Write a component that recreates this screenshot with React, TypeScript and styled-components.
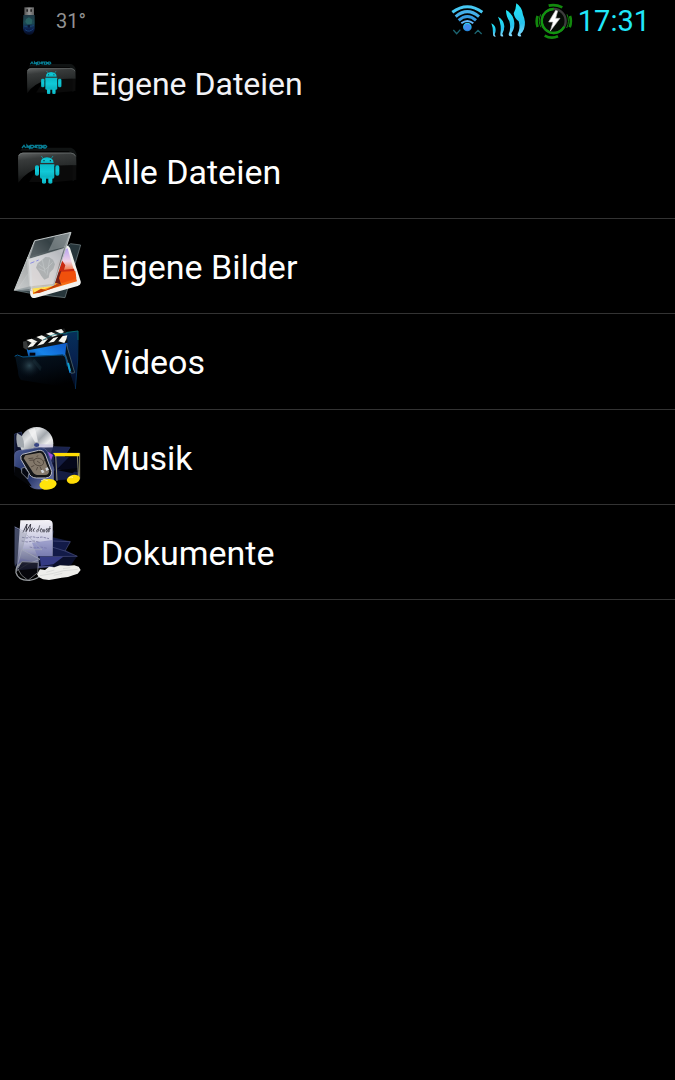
import React from "react";
import styled, { createGlobalStyle } from "styled-components";

const GlobalStyle = createGlobalStyle`
  * { box-sizing: border-box; }
  html, body { margin: 0; background: #000; }
  body { font-family: Roboto, "Liberation Sans", sans-serif; color: #fff; }
`;

const Screen = styled.div`
  min-height: 100vh;
  background: #000;
`;

const StatusBar = styled.div`
  display: flex;
  justify-content: space-between;
  height: 42px;
  padding: 0 25px 0 0;
`;

const StatusGroup = styled.div`
  display: flex;
  align-items: center;
`;

const Temperature = styled.span`
  padding-left: 16px;
  color: #929292;
  font-size: 20px;
  line-height: 42px;
`;

const Clock = styled.time`
  padding-left: 4px;
  color: #20e8fa;
  font-size: 29px;
  line-height: 42px;
`;

const Header = styled.header`
  display: flex;
  align-items: center;
  height: 82px;
  padding-left: 17px;
`;

const Title = styled.h1`
  margin: 0;
  padding: 2px 0 0 6px;
  color: #f2f2f6;
  font-size: 32px;
  font-weight: 400;
  line-height: 84px;
`;

const FolderList = styled.ul`
  display: grid;
  grid-auto-rows: 1fr;
  min-height: 476px;
  margin: 0;
  padding: 0;
  list-style: none;
`;

const FolderRow = styled.li`
  border-bottom: 1px solid #333;
`;

const FolderButton = styled.button`
  display: flex;
  align-items: center;
  gap: 6px;
  width: 100%;
  height: 100%;
  padding: 0 5px;
  border: 0;
  background: none;
  color: #fff;
  font: 400 34px/40px Roboto, "Liberation Sans", sans-serif;
  text-align: left;
`;

const FolderName = styled.span`
  padding-top: 2px;
`;

const Drawing = styled.svg`
  display: block;
  flex: none;
`;

const UsbIcon = () => (
  <Drawing width="40" height="42" viewBox="0 0 120 126" aria-hidden="true">
    <defs>
      <linearGradient id="usbMetal" x2="1">
        <stop offset="0" stopColor="#555" />
        <stop offset=".5" stopColor="#959595" />
        <stop offset="1" stopColor="#606060" />
      </linearGradient>
      <linearGradient id="usbBody" x2="0" y2="1">
        <stop offset="0" stopColor="#203844" />
        <stop offset=".4" stopColor="#1c4a54" />
        <stop offset=".7" stopColor="#0c2050" />
        <stop offset="1" stopColor="#040b1c" />
      </linearGradient>
    </defs>
    <path d="M73 22H102V46H73Z" fill="url(#usbMetal)" />
    <path d="M79 28h5v7h-5zM91 28h5v7h-5z" fill="#292929" />
    <path d="M70 45H104V86Q103 104 88 105Q71 105 69 85Z" fill="url(#usbBody)" />
    <path d="M78 57L87 52L97 59L95 72L81 73L76 65Z" fill="#2c6a68" opacity=".75" />
    <path d="M72 78Q86 86 102 76M75 89Q88 99 100 86" stroke="#173f72" strokeWidth="3" fill="none" />
    <path d="M83 75h7v8h-7z" fill="#0a1834" />
  </Drawing>
);

const WifiIcon = () => (
  <Drawing width="45" height="42" viewBox="12 0 135 126" aria-hidden="true">
    <defs>
      <linearGradient id="wifi" x2="0" y2="1">
        <stop offset="0" stopColor="#30d5fa" />
        <stop offset="1" stopColor="#247ed8" />
      </linearGradient>
    </defs>
    <g fill="none" strokeWidth="9">
      <path d="M37 37Q82 4 127 37" stroke="#46c8f3" />
      <path d="M47 50Q82 20 117 50" stroke="#45afe9" />
      <path d="M56 61Q82 38 108 61" stroke="#379adf" />
      <path d="M64 70Q82 56 100 70" stroke="#66b8fb" strokeWidth="6" />
    </g>
    <circle cx="82" cy="81" r="13" fill="url(#wifi)" />
    <circle cx="82" cy="81" r="9" fill="#4489ed" />
    <path d="M40 90L50 101L61 89M104 101L114 91L125 102" fill="none" stroke="#1c6571" strokeWidth="4" />
  </Drawing>
);

const SignalIcon = () => (
  <Drawing width="43" height="42" viewBox="147 0 129 126" aria-hidden="true">
    <defs>
      <linearGradient id="signal" x2="0" y2="1">
        <stop offset="0" stopColor="#22e7f6" />
        <stop offset=".6" stopColor="#26c2ec" />
        <stop offset="1" stopColor="#8bdcff" />
      </linearGradient>
    </defs>
    <g fill="url(#signal)">
      <path d="M154 70Q167 76 167 90Q167 98 164 103L167 110Q159 111 159 102Q160 84 154 70Z" />
      <path d="M174 50Q192 60 193 79Q193 92 187 101L190 109Q180 112 181 103Q186 76 174 50Z" />
      <path d="M198 30Q221 42 223 68Q224 88 214 100L217 108Q206 111 206 102Q214 85 208 63Q198 49 198 30Z" />
      <path d="M229 10Q246 21 249 44Q259 65 252 87Q248 98 241 102L244 109Q231 111 233 102Q242 85 236 64Q224 56 221 40Q228 28 229 10Z" />
    </g>
  </Drawing>
);

const BatteryIcon = () => (
  <Drawing width="42" height="42" viewBox="276 0 126 126" aria-hidden="true">
    <circle cx="341" cy="63" r="36" stroke="#3d3d3d" strokeWidth="7" fill="#050a05" />
    <path d="M341 27A36 36 0 1 0 373 80" fill="none" stroke="#11960f" strokeWidth="7" />
    <g fill="none" stroke="#12880d" strokeWidth="8">
      <path d="M326 17Q346 12 367 22M314 107Q334 118 354 109" />
      <path d="M293 48Q287 64 293 81M390 48Q396 64 389 82" />
      <path d="M302 43Q293 64 303 82M381 43Q390 64 380 84" strokeWidth="3" />
    </g>
    <path d="M347 31L326 66H339L331 93L360 55H347L353 33Z" fill="#fff" stroke="#bbb" strokeWidth="2" />
  </Drawing>
);

const AndroidFolder = ({ id }: { id: string }) => (
  <g>
    <defs>
      <linearGradient id={id} x2=".25" y2="1">
        <stop offset="0" stopColor="#646767" />
        <stop offset=".25" stopColor="#383b3b" />
        <stop offset=".7" stopColor="#222525" />
        <stop offset="1" stopColor="#080808" />
      </linearGradient>
      <linearGradient id={`${id}Robot`} x2="0" y2="1">
        <stop offset="0" stopColor="#08bac8" />
        <stop offset=".5" stopColor="#10c9d7" />
        <stop offset="1" stopColor="#09adbb" />
      </linearGradient>
    </defs>
    <path d="M45 47L51 41H117L126 38H198Q211 42 215 58L212 133L203 139V62L192 49Z" fill="#101313" />
    <path d="M39 68Q39 54 53 53H197Q211 53 213 66L214 91Q166 91 109 96Q64 109 40 143Z" fill={`url(#${id})`} />
    <path d="M109 96Q163 91 214 91V135L153 141H72L90 113Z" fill="#0c0d0d" opacity=".8" />
    <path d="M41 63Q43 55 54 54H197Q209 55 212 64" stroke="#767b7b" strokeWidth="2" fill="none" />
    <g stroke="#087c92" strokeWidth="4" fill="none">
      <path d="M51 39L57 31L62 39M66 39V31L73 39V31M77 31H84L87 35L82 39H77ZM91 39V31H98L91 36L98 39M102 31H109V39H102ZM113 31V39M117 31H122L125 35L121 39H117Z" />
    </g>
    <g fill={`url(#${id}Robot)`}>
      <path d="M107 84Q107 68 126 67Q145 68 146 84Z" />
      <path d="M105 88H148V126Q148 131 143 131H110Q105 131 105 126Z" />
      <rect x="90" y="91" width="12" height="31" rx="5" />
      <rect x="151" y="91" width="12" height="31" rx="5" />
      <path d="M111 126H123V144Q117 149 111 144ZM130 126H142V144Q136 149 130 144Z" />
    </g>
    <path d="M114 70L109 63M139 70L144 63" stroke="#0cb4c3" strokeWidth="2" />
    <circle cx="117" cy="77" r="2" fill="#05242a" />
    <circle cx="136" cy="77" r="2" fill="#05242a" />
  </g>
);

const PicturesArt = () => (
  <g>
    <defs>
      <linearGradient id="glass" x1="1" x2="0" y2="1">
        <stop offset="0" stopColor="#d5dadb" />
        <stop offset=".28" stopColor="#535d60" />
        <stop offset=".5" stopColor="#a7acad" />
        <stop offset="1" stopColor="#dddede" />
      </linearGradient>
      <linearGradient id="photo" x2="0" y2="1">
        <stop offset="0" stopColor="#b8a2f0" />
        <stop offset=".28" stopColor="#eed3e6" />
        <stop offset=".45" stopColor="#f0855c" />
        <stop offset=".6" stopColor="#f04a12" />
        <stop offset="1" stopColor="#ff9c18" />
      </linearGradient>
    </defs>
    <path d="M197 56L227 60L180 218L88 207L35 197L70 145Z" fill="#26353a" stroke="#79888b" strokeWidth="2" />
    <path d="M67 97L180 62Q191 59 195 69L227 169Q229 179 218 183L90 219Q79 221 76 210L65 106Z" fill="#f3f2ef" />
    <path d="M77 104L188 70L216 169L84 208Z" fill="url(#photo)" />
    <path d="M160 107L170 105L181 121L177 134L207 131L213 155L178 158L151 151L156 139L149 128Z" fill="#c92a10" />
    <path d="M168 140L211 138L214 160L172 174L156 165Z" fill="#f0500c" />
    <path d="M82 188L104 181L116 187L134 178L144 159L151 176L170 174L87 203Z" fill="#ffe052" />
    <path d="M84 205L108 191L123 195L156 176L172 179L103 204Z" fill="#c2400c" />
    <path d="M151 132L157 143L169 137L162 160L169 179L151 173L144 186L143 161Z" fill="#762017" />
    <path d="M89 47L198 22L146 181L28 196Z" fill="url(#glass)" opacity=".91" />
    <path d="M91 49L194 25L174 73L73 101Z" fill="#273439" opacity=".6" />
    <path d="M150 36L196 24L180 66L130 78Z" fill="#a3abad" opacity=".5" />
    <path d="M70 102L177 69L145 177L76 184Z" fill="#e6e7e9" opacity=".65" />
    <path d="M109 153L102 141L93 128L98 115L110 106L121 96L133 97L144 104L150 118L145 132L134 143L131 158L118 164Z" fill="#9da2a4" opacity=".7" />
    <path d="M101 117L122 133L143 112M112 105L121 145M101 131L120 139M134 103L126 151" stroke="#c2c6c7" strokeWidth="3" fill="none" opacity=".7" />
    <path d="M76 115L88 110M94 108L101 105" stroke="#8c8ce2" strokeWidth="3" />
    <path d="M89 47L198 22L146 181L28 196Z" fill="none" stroke="#bfc6c7" strokeWidth="3" />
    <path d="M30 195L76 184L80 199L52 199" fill="#8f999c" opacity=".7" />
  </g>
);

const VideosArt = () => (
  <g>
    <defs>
      <linearGradient id="videoBlue" x1="1" x2="0" y2="1">
        <stop offset="0" stopColor="#0c4fc0" />
        <stop offset=".5" stopColor="#1684e9" />
        <stop offset="1" stopColor="#0a2866" />
      </linearGradient>
      <linearGradient id="videoFront" x2=".4" y2="1">
        <stop offset="0" stopColor="#06141f" />
        <stop offset=".5" stopColor="#030b14" />
        <stop offset="1" stopColor="#000001" />
      </linearGradient>
      <linearGradient id="videoBack" x2="0" y2="1">
        <stop offset="0" stopColor="#06305a" />
        <stop offset=".5" stopColor="#07204e" />
        <stop offset="1" stopColor="#020817" />
      </linearGradient>
      <radialGradient id="videoGlow">
        <stop offset="0" stopColor="#2c4550" />
        <stop offset="1" stopColor="#06101a" stopOpacity="0" />
      </radialGradient>
    </defs>
    <path d="M172 39L219 33L218 120L211 207L190 145Z" fill="url(#videoBack)" />
    <path d="M172 39L219 33V60" fill="none" stroke="#08686f" strokeWidth="3" />
    <path d="M219 60L218 120L211 207" fill="none" stroke="#062d55" strokeWidth="3" />
    <path d="M64 84L186 64L198 158L185 162L175 115L70 109Z" fill="url(#videoBlue)" />
    <path d="M184 72L209 158L199 160L181 103" fill="#03101b" stroke="#405661" strokeWidth="3" />
    <path d="M54 65L178 25L185 40L60 80Z" fill="#181a1a" />
    <path d="M65 84L186 49L188 68L69 91Z" fill="#111414" />
    <g fill="#f5f5ef">
      <path d="M64 60L80 56L98 65L82 70ZM94 51L110 46L128 55L112 60ZM123 41L139 36L158 45L143 50ZM149 32L169 27L177 36L168 41Z" />
      <path d="M66 83L78 70L95 66L84 79ZM96 77L112 61L129 57L115 72ZM129 69L145 54L160 50L147 65ZM160 64L172 49L187 46L184 58L178 69Z" />
    </g>
    <path d="M54 65L64 63L70 82L64 89L55 83Z" fill="#383b3b" />
    <path d="M114 61Q137 39 187 40" stroke="#147b8d" strokeWidth="2" fill="none" />
    <path d="M74 98H91V107H74Z" fill="#02030d" />
    <path d="M30 106L48 110L168 104Q180 102 183 117Q189 151 211 209L180 201L48 180Q39 172 39 153Z" fill="url(#videoFront)" />
    <circle cx="73" cy="137" r="36" fill="url(#videoGlow)" />
    <path d="M88 116L110 141L106 154L82 123Z" fill="#243e48" opacity=".3" />
    <path d="M29 109L37 105L54 111L166 105Q180 103 183 117L187 139" stroke="#06558a" strokeWidth="3" fill="none" />
    <path d="M187 130L193 153L198 153L192 128Z" fill="#11a1c8" />
  </g>
);

const MusicArt = () => (
  <g>
    <defs>
      <linearGradient id="disc" x2="1" y2="1">
        <stop offset="0" stopColor="#8d9298" />
        <stop offset=".3" stopColor="#e1e3e5" />
        <stop offset=".48" stopColor="#a3a8ae" />
        <stop offset=".65" stopColor="#eee" />
        <stop offset="1" stopColor="#9a9fae" />
      </linearGradient>
      <linearGradient id="player" x2="1" y2="1">
        <stop offset="0" stopColor="#4e5d95" />
        <stop offset=".5" stopColor="#1c2c61" />
        <stop offset="1" stopColor="#8088b8" />
      </linearGradient>
    </defs>
    <path d="M29 42L49 36L56 64L46 85L100 79L195 82L177 109L147 152L70 158L30 165Z" fill="#0c112d" stroke="#35426f" strokeWidth="2" />
    <ellipse cx="95" cy="70" rx="50" ry="49" fill="url(#disc)" />
    <path d="M90 67L70 31L90 24L99 65Z" fill="#f8f8f8" opacity=".7" />
    <path d="M101 72L145 74Q144 98 121 112Z" fill="#c9c6df" opacity=".8" />
    <ellipse cx="95" cy="75" rx="8" ry="6" fill="#384584" />
    <path d="M36 39Q31 56 38 81L57 83Q58 60 50 48Z" fill="#a2a8ae" />
    <path d="M85 83L195 81L178 113L143 129L97 103Z" fill="#1c2553" opacity=".88" />
    <path d="M128 95L144 105L138 122Z" fill="#984dda" />
    <path d="M29 104Q30 91 51 91L102 83Q120 82 127 95L146 145V182Q139 207 105 207Q83 208 73 196L55 169L29 157Z" fill="url(#player)" stroke="#606998" strokeWidth="2" />
    <path d="M52 103L101 91Q115 89 122 105L140 154Q141 172 122 174H94Q77 174 70 156L48 118Q45 107 52 103Z" fill="#121417" stroke="#b8bac5" strokeWidth="3" />
    <path d="M61 106L104 98Q111 98 116 110L132 154Q132 165 120 165H96Q86 163 79 149L56 115Z" fill="#83786a" />
    <g fill="none" stroke="#41372f" strokeWidth="2">
      <ellipse cx="101" cy="126" rx="15" ry="11" transform="rotate(15 101 126)" />
      <path d="M70 116L85 114M73 121L87 120M95 111L99 106M115 123L121 121M88 136L78 141M105 140L110 151M98 141L94 151M96 123L106 130" />
    </g>
    <path d="M107 151L114 149L119 157L111 160ZM121 145L128 142L132 149L124 153Z" fill="#d2d4d8" />
    <path d="M28 139L44 145L80 199L73 197L27 165Z" fill="#040508" />
    <path d="M50 145L59 142L72 159L68 177L50 159Z" fill="#040711" stroke="#a8acb2" strokeWidth="2" />
    <path d="M147 111H222V177L151 182Z" fill="#05071a" />
    <path d="M150 111H192L156 148L219 157V176L151 181Z" fill="#151d43" />
    <path d="M158 151L219 144L203 160Z" fill="#02030a" />
    <path d="M145 100H224V176M152 103L156 183M217 106L221 177" fill="none" stroke="#d5cf98" strokeWidth="2" />
    <path d="M145 99H223V109H151Z" fill="#ffdc05" />
    <ellipse cx="129" cy="193" rx="26" ry="16" transform="rotate(-8 129 193)" fill="#ffe30a" />
    <ellipse cx="205" cy="178" rx="20" ry="13" transform="rotate(-13 205 178)" fill="#ffdc05" />
    <path d="M108 183Q117 174 128 182M191 174Q198 168 204 172" stroke="#fff495" strokeWidth="3" fill="none" />
  </g>
);

const DocumentsArt = () => (
  <g>
    <defs>
      <linearGradient id="paper" x2="0" y2="1">
        <stop offset="0" stopColor="#f4f2f7" />
        <stop offset=".45" stopColor="#c6c7e0" />
        <stop offset="1" stopColor="#3c4078" />
      </linearGradient>
      <linearGradient id="navy" x2="1" y2="1">
        <stop offset="0" stopColor="#232b50" />
        <stop offset="1" stopColor="#050918" />
      </linearGradient>
    </defs>
    <path d="M29 49L47 58L139 69L147 60L143 82L196 94L181 119L217 138L195 168L35 181L28 159Z" fill="url(#navy)" />
    <path d="M143 83L196 95L180 121L211 139L144 154Z" fill="#121a48" />
    <path d="M46 31L133 30Q143 32 143 42V170L44 180L36 172Z" fill="url(#paper)" />
    <g fill="none" stroke="#373643" strokeWidth="3">
      <path d="M54 67L66 42L63 65L77 42L74 65M82 53Q75 63 80 65M89 55Q81 61 87 65" />
      <path d="M104 46L99 65M100 57Q92 60 96 67M105 62Q113 57 109 55Q102 62 108 67M114 57L111 67M116 58L115 67M119 58L118 67M123 60Q129 57 126 55Q120 62 125 67L130 57V67M135 48L132 66M129 56H138" strokeWidth="2" />
    </g>
    <path d="M51 82L66 84L81 80L97 83L111 81L132 86M50 93L66 96L87 93L105 97M74 111L87 114L106 111L127 115M69 134L94 135" stroke="#8887aa" strokeWidth="3" strokeDasharray="8 3" fill="none" />
    <path d="M81 98L142 90V151L105 157Z" fill="#7074b4" opacity=".5" />
    <path d="M99 139L216 138L198 165L102 169Z" fill="#0a0f2c" />
    <path d="M104 140H175L145 163L108 168Z" fill="#343a84" />
    <path d="M145 93L196 95L180 123L217 139L105 140M180 123L144 112" stroke="#4b5284" strokeWidth="2" fill="none" />
    <path d="M29 54L65 71L52 119L104 144L102 159L47 145L29 169" fill="#888d9c" opacity=".35" />
    <path d="M29 51Q47 60 65 68L50 119L35 174M66 75L111 119L51 119L105 148L68 162L35 182" fill="none" stroke="#a5a9ba" strokeWidth="2" />
    <path d="M53 157Q31 166 33 188Q39 212 73 211Q101 206 104 196L99 202" fill="none" stroke="#979b9f" strokeWidth="4" />
    <path d="M38 176L50 155L100 157L98 188L69 211L50 196Z" fill="#08090f" opacity=".75" stroke="#8d9094" strokeWidth="3" />
    <path d="M96 193L105 178L120 180L132 170L148 172L165 166L190 167L208 166L221 170L227 180L218 191L204 196L189 201L170 203L150 207L132 210L114 208L102 202Z" fill="#eeeeeb" />
    <path d="M105 197L141 191L176 182L218 178M124 187L148 180M146 196L172 190M174 176L196 173" stroke="#d2d3d2" strokeWidth="2" fill="none" />
  </g>
);

const folders = [
  { name: "Alle Dateien", viewBox: "0 -33 270 282", art: <AndroidFolder id="allFiles" /> },
  { name: "Eigene Bilder", viewBox: "0 -18 270 282", art: <PicturesArt /> },
  { name: "Videos", viewBox: "0 -18 270 282", art: <VideosArt /> },
  { name: "Musik", viewBox: "0 -30 270 282", art: <MusicArt /> },
  { name: "Dokumente", viewBox: "0 -15 270 282", art: <DocumentsArt /> },
];

export default function App() {
  return (
    <Screen>
      <GlobalStyle />
      <StatusBar>
        <StatusGroup>
          <UsbIcon />
          <Temperature>31°</Temperature>
        </StatusGroup>
        <StatusGroup>
          <WifiIcon />
          <SignalIcon />
          <BatteryIcon />
          <Clock>17:31</Clock>
        </StatusGroup>
      </StatusBar>
      <Header>
        <Drawing width="68" height="82" viewBox="3 -41 245 295" aria-hidden="true">
          <AndroidFolder id="header" />
        </Drawing>
        <Title>Eigene Dateien</Title>
      </Header>
      <main>
        <FolderList>
          {folders.map(({ name, viewBox, art }) => (
            <FolderRow key={name}>
              <FolderButton type="button">
                <Drawing width="90" height="94" viewBox={viewBox} aria-hidden="true">
                  {art}
                </Drawing>
                <FolderName>{name}</FolderName>
              </FolderButton>
            </FolderRow>
          ))}
        </FolderList>
      </main>
    </Screen>
  );
}
